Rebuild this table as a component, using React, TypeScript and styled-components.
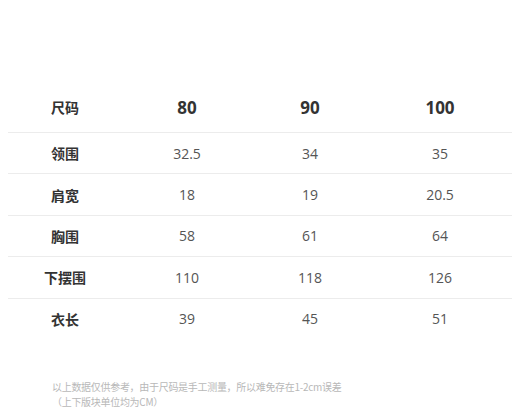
import styled, { createGlobalStyle } from "styled-components";

const GlobalStyle = createGlobalStyle`
  html, body {
    margin: 0;
    padding: 0;
    background: #fff;
    font-family: "Open Sans", "Noto Sans CJK SC", sans-serif;
  }
`;

const Page = styled.div`
  width: 520px;
  height: 407px;
  padding: 82px 8px 0;
  box-sizing: border-box;
  overflow: hidden;
`;

const Table = styled.div`
  display: grid;
  grid-template-columns: 114px 130px 116px 144px;
`;

const Row = styled.div`
  display: contents;
`;

const Cell = styled.div<{ $header?: boolean; $label?: boolean; $first?: boolean }>`
  display: flex;
  align-items: center;
  justify-content: center;
  height: ${(p) => (p.$header ? "50px" : "40.4px")};
  border-top: ${(p) => (p.$first ? "none" : "1px solid #ececec")};
  font-family: ${(p) =>
    p.$label
      ? `"Noto Sans CJK SC", sans-serif`
      : `"Open Sans", "Noto Sans CJK SC", sans-serif`};
  font-size: ${(p) => (p.$header && !p.$label ? "17px" : "14px")};
  font-weight: ${(p) => (p.$header || p.$label ? 700 : 400)};
  color: ${(p) => (p.$header || p.$label ? "#333" : "#555")};
`;

const Note = styled.p`
  margin: 40px 0 0 44px;
  font-family: "Noto Sans CJK SC", sans-serif;
  font-size: 10px;
  letter-spacing: -0.3px;
  line-height: 15px;
  color: #b8b8b8;
`;

const sizes = ["80", "90", "100"];

const rows: [string, string[]][] = [
  ["领围", ["32.5", "34", "35"]],
  ["肩宽", ["18", "19", "20.5"]],
  ["胸围", ["58", "61", "64"]],
  ["下摆围", ["110", "118", "126"]],
  ["衣长", ["39", "45", "51"]],
];

export default function App() {
  return (
    <>
      <GlobalStyle />
      <Page>
        <Table>
          <Row>
            <Cell $header $label $first>
              尺码
            </Cell>
            {sizes.map((s) => (
              <Cell key={s} $header $first>
                {s}
              </Cell>
            ))}
          </Row>
          {rows.map(([label, values]) => (
            <Row key={label}>
              <Cell $label>{label}</Cell>
              {values.map((v, i) => (
                <Cell key={i}>{v}</Cell>
              ))}
            </Row>
          ))}
        </Table>
        <Note>
          以上数据仅供参考，由于尺码是手工测量，所以难免存在1-2cm误差
          <br />
          （上下版块单位均为CM）
        </Note>
      </Page>
    </>
  );
}
